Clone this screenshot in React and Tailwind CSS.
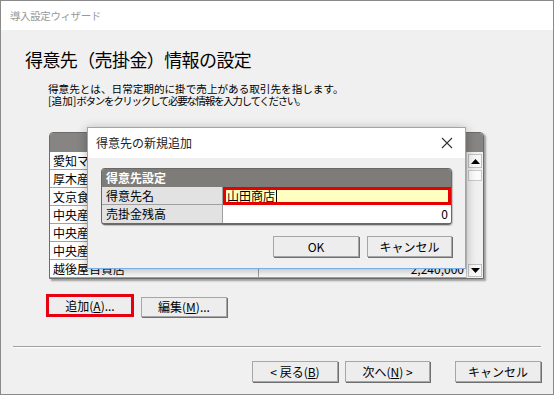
import React from 'react'

const font = 'font-["Meiryo_UI","Noto_Sans_CJK_JP",sans-serif]'

function WinButton({ children, className = '' }) {
  return (
    <div
      className={`flex items-center justify-center bg-[#ededed] border border-[#a6a6a6] shadow-[1px_1px_0_#6f6f6f] text-[12px] text-black ${className}`}
    >
      {children}
    </div>
  )
}

// values of the rows behind the dialog are not visible in the wizard
const rows = [
  ['愛知マート', ''],
  ['厚木産業', ''],
  ['文京食品', ''],
  ['中央産業', ''],
  ['中央産機', ''],
  ['中央産商', ''],
  ['越後屋百貨店', '2,240,000'],
]

function Triangle({ up }) {
  return (
    <svg width="9" height="5" viewBox="0 0 9 5">
      <path d={up ? 'M0 5 L4.5 0 L9 5 Z' : 'M0 0 L4.5 5 L9 0 Z'} fill="#000" />
    </svg>
  )
}

function CustomerList() {
  return (
    <div className="ml-[48px] mt-[25px] flex h-[147px] w-[435px] flex-col rounded-t-[4px] border border-[#6c6c6c] bg-white shadow-[2px_2px_2px_rgba(0,0,0,0.35)]">
      <div className="h-[19px] rounded-t-[3px] bg-[#878583]" />
      <div className="flex flex-1">
        <div className="flex flex-1 flex-col">
          {rows.map(([name, amount]) => (
            <div key={name} className="flex h-[18px] text-[12px] leading-[17px] text-black">
              <div className="w-[209px] border-r border-b border-[#a3a3a3] px-[3px]">{name}</div>
              <div className="flex-1 border-b border-[#a3a3a3] pr-[2px] text-right">{amount}</div>
            </div>
          ))}
        </div>
        <div className="flex w-[17px] flex-col border-l border-[#c8c8c8] bg-[#f0f0f0]">
          <div className="mx-[1px] mt-[2px] flex h-[14px] items-center justify-center border border-[#c0c0c0] bg-[#f7f7f7]">
            <Triangle up />
          </div>
          <div className="mx-[1px] mt-[2px] h-[11px] border border-[#c8c8c8] bg-[#fbfbfb]" />
          <div className="flex-1" />
          <div className="mx-[1px] mb-[1px] flex h-[13px] items-center justify-center border border-[#c0c0c0] bg-[#f7f7f7]">
            <Triangle />
          </div>
        </div>
      </div>
    </div>
  )
}

function AddDialog() {
  return (
    <div className="absolute left-[86px] top-[126px] flex h-[142px] w-[379px] flex-col border border-[#78aee4] bg-[#f0f0f0] shadow-[0_2px_10px_rgba(0,0,0,0.3)]">
      <div className="flex h-[30px] items-center justify-between bg-white pl-[8px] pr-[12px]">
        <span className="text-[12px] text-[#222]">得意先の新規追加</span>
        <svg width="12" height="12" viewBox="0 0 12 12">
          <path d="M1 1 L11 11 M11 1 L1 11" stroke="#333" strokeWidth="1.1" />
        </svg>
      </div>
      <div className="ml-[13px] mt-[10px] w-[351px] overflow-hidden rounded-[4px] border border-b-2 border-[#6b6966] shadow-[1px_1px_1px_rgba(0,0,0,0.2)]">
        <div className="h-[18px] bg-[#7e7c79] px-[4px] text-[12px] font-bold leading-[18px] text-white">得意先設定</div>
        <div className="flex h-[18px] text-[12px] leading-[18px] text-black">
          <div className="w-[121px] border-b border-r border-[#a0a0a0] bg-[#e2e2e2] px-[4px]">得意先名</div>
          <div className="flex flex-1 items-center border-[3px] border-[#e60000] bg-[#ffffc2] px-[1px] leading-[12px]">
            山田商店
            <span className="ml-[1px] h-[12px] w-px bg-black" />
          </div>
        </div>
        <div className="flex h-[18px] text-[12px] leading-[18px] text-black">
          <div className="w-[121px] border-r border-[#a0a0a0] bg-[#e2e2e2] px-[4px]">売掛金残高</div>
          <div className="flex-1 bg-white pr-[3px] text-right">0</div>
        </div>
      </div>
      <div className="mt-[11px] flex justify-end gap-[8px] pr-[13px]">
        <WinButton className="h-[21px] w-[86px]">OK</WinButton>
        <WinButton className="h-[21px] w-[85px]">キャンセル</WinButton>
      </div>
    </div>
  )
}

export default function App() {
  return (
    <div className={`${font} relative flex h-[395px] w-[554px] flex-col border border-[#8a8a8a] bg-[#f0f0f0]`}>
      <div className="flex h-[29px] items-center bg-white pl-[9px] text-[10.5px] tracking-[-0.4px] text-[#9a9a9a]">
        導入設定ウィザード
      </div>

      <h1 className="ml-[24px] mt-[17px] text-[18px] leading-[24px] tracking-[-0.6px] text-black">
        得意先（売掛金）情報の設定
      </h1>

      <div className="ml-[47px] mt-[12px] text-[10.6px] leading-[12px] text-black">
        <p>得意先とは、日常定期的に掛で売上がある取引先を指します。</p>
        <p className="tracking-[-1.4px]">
          <span className="tracking-normal">[追加]</span>ボタンをクリックして必要な情報を入力してください。
        </p>
      </div>

      <CustomerList />

      <div className="ml-[45px] mt-[15px] flex items-start gap-[7px]">
        <div className="flex h-[23px] w-[88px] items-center justify-center border-[3px] border-[#e60012] bg-[#ededed] text-[12px] text-black">
          追加(<span className="underline">A</span>)...
        </div>
        <WinButton className="mt-[3px] h-[20px] w-[86px]">
          編集(<span className="underline">M</span>)...
        </WinButton>
      </div>

      <div className="mx-[12px] mt-[29px] border-t border-b border-t-[#a0a0a0] border-b-white" />

      <div className="mt-[13px] flex justify-end pr-[12px]">
        <WinButton className="h-[21px] w-[86px]">
          &lt; 戻る(<span className="underline">B</span>)
        </WinButton>
        <WinButton className="ml-[7px] h-[21px] w-[85px]">
          次へ(<span className="underline">N</span>) &gt;
        </WinButton>
        <WinButton className="ml-[25px] h-[21px] w-[86px]">キャンセル</WinButton>
      </div>

      <AddDialog />
    </div>
  )
}
